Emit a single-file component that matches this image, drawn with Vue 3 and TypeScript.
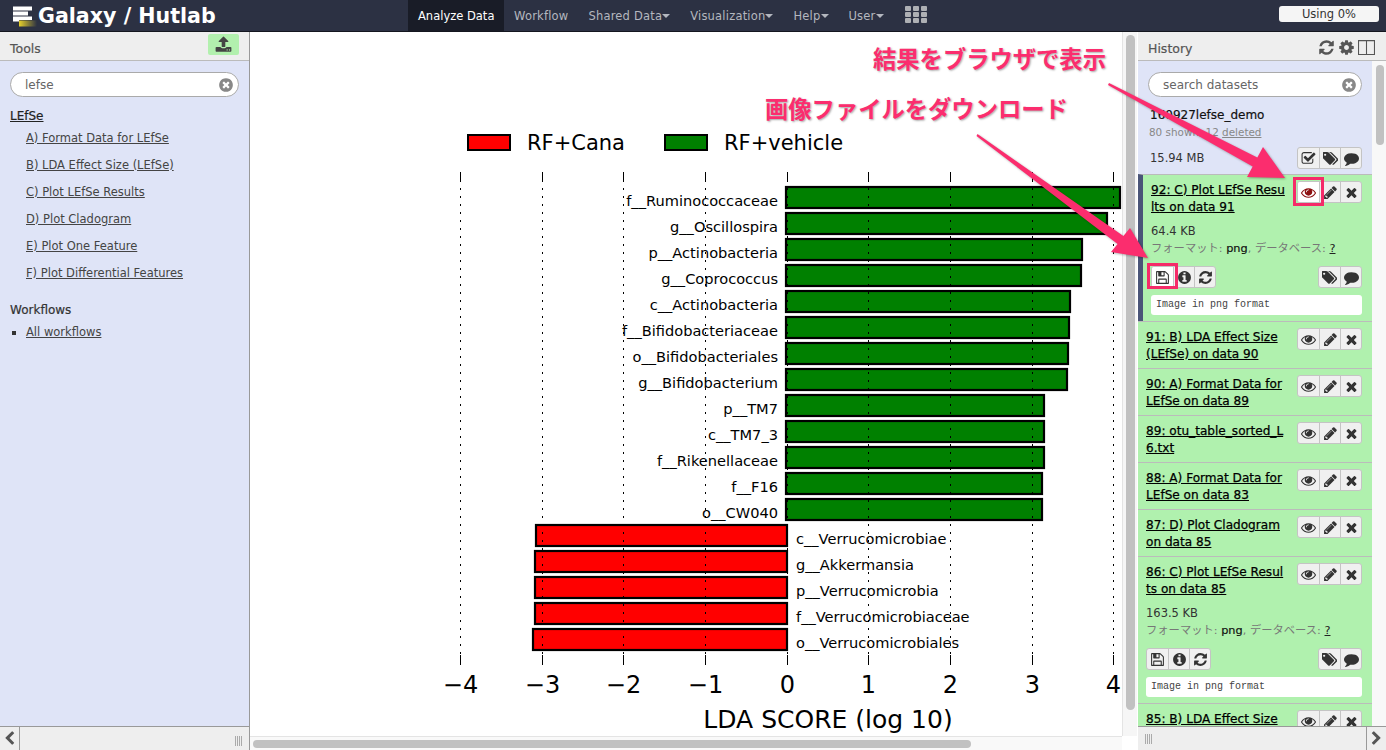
<script setup lang="ts">
// chart rows: label + outer bar end in page pixels
const greenRows: [string, number][] = [
  ['f__Ruminococcaceae', 1121], ['g__Oscillospira', 1108], ['p__Actinobacteria', 1083],
  ['g__Coprococcus', 1082], ['c__Actinobacteria', 1071], ['f__Bifidobacteriaceae', 1070],
  ['o__Bifidobacteriales', 1069], ['g__Bifidobacterium', 1068], ['p__TM7', 1045],
  ['c__TM7_3', 1045], ['f__Rikenellaceae', 1045], ['f__F16', 1043], ['o__CW040', 1043],
]
const redRows: [string, number][] = [
  ['c__Verrucomicrobiae', 535], ['g__Akkermansia', 534], ['p__Verrucomicrobia', 534],
  ['f__Verrucomicrobiaceae', 534], ['o__Verrucomicrobiales', 532],
]
const ticks = [
  { x: 460.5, label: '−4' }, { x: 542.5, label: '−3' }, { x: 623.5, label: '−2' },
  { x: 705.5, label: '−1' }, { x: 787.5, label: '0' }, { x: 868.5, label: '1' },
  { x: 950.5, label: '2' }, { x: 1032.5, label: '3' }, { x: 1113.5, label: '4' },
]
const rowCenter = (i: number) => 197.5 + i * 26

const toolLinks = [
  'A) Format Data for LEfSe', 'B) LDA Effect Size (LEfSe)', 'C) Plot LEfSe Results',
  'D) Plot Cladogram', 'E) Plot One Feature', 'F) Plot Differential Features',
]
const navItems = [
  { label: 'Analyze Data', active: true }, { label: 'Workflow' },
  { label: 'Shared Data', caret: true }, { label: 'Visualization', caret: true },
  { label: 'Help', caret: true }, { label: 'User', caret: true },
]

interface Dataset { title: string; size?: string; current?: boolean }
const datasets: Dataset[] = [
  { title: '92: C) Plot LEfSe Resu\nlts on data 91', size: '64.4 KB', current: true },
  { title: '91: B) LDA Effect Size\n(LEfSe) on data 90' },
  { title: '90: A) Format Data for\nLEfSe on data 89' },
  { title: '89: otu_table_sorted_L\n6.txt' },
  { title: '88: A) Format Data for\nLEfSe on data 83' },
  { title: '87: D) Plot Cladogram\non data 85' },
  { title: '86: C) Plot LEfSe Resul\nts on data 85', size: '163.5 KB' },
  { title: '85: B) LDA Effect Size' },
]

// font-awesome 4 outlines, 1792 box
const icons: Record<string, string> = {
  eye: 'M1664 960q-152-236-381-353 61 104 61 225 0 185-131.5 316.5t-316.5 131.5-316.5-131.5-131.5-316.5q0-121 61-225-229 117-381 353 133 205 333.5 326.5t434.5 121.5 434.5-121.5 333.5-326.5zm-720-384q0-20-14-34t-34-14q-125 0-214.5 89.5t-89.5 214.5q0 20 14 34t34 14 34-14 14-34q0-86 61-147t147-61q20 0 34-14t14-34zm848 384q0 34-20 69-140 230-376.5 368.5t-499.5 138.5-499.5-139-376.5-368q-20-35-20-69t20-69q140-229 376.5-368t499.5-139 499.5 139 376.5 368q20 35 20 69z',
  pencil: 'M491 1536l91-91-235-235-91 91v107h128v128h107zm523-928q0-22-22-22-10 0-17 7l-542 542q-7 7-7 17 0 22 22 22 10 0 17-7l542-542q7-7 7-17zm-54-192l416 416-832 832h-416v-416zm683 96q0 53-37 90l-166 166-416-416 166-165q36-38 90-38 53 0 91 38l235 234q37 39 37 91z',
  times: 'M1490 1322q0 40-28 68l-136 136q-28 28-68 28t-68-28l-294-294-294 294q-28 28-68 28t-68-28l-136-136q-28-28-28-68t28-68l294-294-294-294q-28-28-28-68t28-68l136-136q28-28 68-28t68 28l294 294 294-294q28-28 68-28t68 28l136 136q28 28 28 68t-28 68l-294 294 294 294q28 28 28 68z',
  comment: 'M1792 896q0 174-120 321.5t-326 233-450 85.5q-70 0-145-8-198 175-460 242-49 14-114 22-17 2-30.5-9t-17.5-29v-1q-3-4-.5-12t2-10 4.5-9.5l6-9 7-8.5 8-9q7-8 31-34.5t34.5-38 31-39.5 32.5-51 27-59 26-76q-157-89-247.5-220t-90.5-281q0-130 71-248.5t191-204.5 286-136.5 348-50.5q244 0 450 85.5t326 233 120 321.5z',
  tags: 'M384 448q0-53-37.5-90.5t-90.5-37.5-90.5 37.5-37.5 90.5 37.5 90.5 90.5 37.5 90.5-37.5 37.5-90.5zm1067 576q0 53-37 90l-491 492q-39 37-91 37-53 0-90-37l-715-716q-38-37-64.5-101t-26.5-117v-416q0-52 38-90t90-38h416q53 0 117 26.5t102 64.5l715 714q37 39 37 91zm384 0q0 53-37 90l-491 492q-39 37-91 37-36 0-59-14t-53-45l470-470q37-37 37-90 0-52-37-91l-715-714q-38-38-102-64.5t-117-26.5h224q53 0 117 26.5t102 64.5l715 714q37 39 37 91z',
  info: 'M1152 1376v-160q0-14-9-23t-23-9h-96v-512q0-14-9-23t-23-9h-320q-14 0-23 9t-9 23v160q0 14 9 23t23 9h96v320h-96q-14 0-23 9t-9 23v160q0 14 9 23t23 9h448q14 0 23-9t9-23zm-128-896v-160q0-14-9-23t-23-9h-192q-14 0-23 9t-9 23v160q0 14 9 23t23 9h192q14 0 23-9t9-23zm640 416q0 209-103 385.5t-279.5 279.5-385.5 103-385.5-103-279.5-279.5-103-385.5 103-385.5 279.5-279.5 385.5-103 385.5 103 279.5 279.5 103 385.5z',
  clear: 'M1277 1122q0-26-19-45l-181-181 181-181q19-19 19-45 0-27-19-46l-90-90q-19-19-46-19-26 0-45 19l-181 181-181-181q-19-19-45-19-27 0-46 19l-90 90q-19 19-19 46 0 26 19 45l181 181-181 181q-19 19-19 45 0 27 19 46l90 90q19 19 46 19 26 0 45-19l181-181 181 181q19 19 45 19 27 0 46-19l90-90q19-19 19-46zm387-226q0 209-103 385.5t-279.5 279.5-385.5 103-385.5-103-279.5-279.5-103-385.5 103-385.5 279.5-279.5 385.5-103 385.5 103 279.5 279.5 103 385.5z',
  save: 'M512 1536h768v-384h-768v384zm896 0h128v-896q0-14-10-38.5t-20-34.5l-281-281q-10-10-34-20t-39-10v416q0 40-28 68t-68 28h-576q-40 0-68-28t-28-68v-416h-128v1280h128v-416q0-40 28-68t68-28h832q40 0 68 28t28 68v416zm-384-928v-320q0-13-9.5-22.5t-22.5-9.5h-192q-13 0-22.5 9.5t-9.5 22.5v320q0 13 9.5 22.5t22.5 9.5h192q13 0 22.5-9.5t9.5-22.5zm640 32v928q0 40-28 68t-68 28h-1344q-40 0-68-28t-28-68v-1344q0-40 28-68t68-28h928q40 0 88 20t76 48l280 280q28 28 48 76t20 88z',
  check: 'M1472 930v318q0 119-84.5 203.5t-203.5 84.5h-832q-119 0-203.5-84.5t-84.5-203.5v-832q0-119 84.5-203.5t203.5-84.5h832q63 0 117 25 15 7 18 23 3 17-9 29l-49 49q-10 10-23 10-3 0-9-2-23-6-45-6h-832q-66 0-113 47t-47 113v832q0 66 47 113t113 47h832q66 0 113-47t47-113v-254q0-13 9-22l64-64q10-10 23-10 6 0 12 3 20 8 20 29zm231-489l-814 814q-24 24-57 24t-57-24l-430-430q-24-24-24-57t24-57l110-110q24-24 57-24t57 24l263 263 647-647q24-24 57-24t57 24l110 110q24 24 24 57t-24 57z',
  refresh: 'M1639 1056q0 5-1 7-64 268-268 434.5t-478 166.5q-146 0-282.5-55t-243.5-157l-129 129q-19 19-45 19t-45-19-19-45v-448q0-26 19-45t45-19h448q26 0 45 19t19 45-19 45l-137 137q71 66 161 102t187 36q134 0 250-65t186-179q11-17 53-117 8-23 30-23h192q13 0 22.5 9.5t9.5 22.5zm25-800v448q0 26-19 45t-45 19h-448q-26 0-45-19t-19-45 19-45l138-138q-148-137-349-137-134 0-250 65t-186 179q-11 17-53 117-8 23-30 23h-199q-13 0-22.5-9.5t-9.5-22.5v-7q65-268 270-434.5t480-166.5q146 0 284 55.5t245 156.5l130-129q19-19 45-19t45 19 19 45z',
  cog: 'M1152 896q0-106-75-181t-181-75-181 75-75 181 75 181 181 75 181-75 75-181zm512-109v222q0 12-8 23t-20 13l-185 28q-19 54-39 91 35 50 107 138 10 12 10 25t-9 23q-27 37-99 108t-94 71q-12 0-26-9l-138-108q-44 23-91 38-16 136-29 186-7 28-36 28h-222q-14 0-24.5-8.5t-11.5-21.5l-28-184q-49-16-90-37l-141 107q-10 9-25 9-14 0-25-11-126-114-165-168-7-10-7-23 0-12 8-23 15-21 51-66.5t54-70.5q-27-50-41-99l-183-27q-13-2-21-12.5t-8-23.5v-222q0-12 8-23t19-13l186-28q14-46 39-92-40-57-107-138-10-12-10-24 0-10 9-23 26-36 98.5-107.5t94.5-71.5q13 0 26 10l138 107q44-23 91-38 16-136 29-186 7-28 36-28h222q14 0 24.5 8.5t11.5 21.5l28 184q49 16 90 37l142-107q9-9 24-9 13 0 25 10 129 119 165 170 7 8 7 22 0 12-8 23-15 21-51 66.5t-54 70.5q26 50 41 98l183 28q13 2 21 12.5t8 23.5z',
  upload: 'M1344 1472q0-26-19-45t-45-19-45 19-19 45 19 45 45 19 45-19 19-45zm256 0q0-26-19-45t-45-19-45 19-19 45 19 45 45 19 45-19 19-45zm128-224v320q0 40-28 68t-68 28h-1472q-40 0-68-28t-28-68v-320q0-40 28-68t68-28h427q21 56 70.5 92t110.5 36h256q61 0 110.5-36t70.5-92h427q40 0 68 28t28 68zm-325-648q-17 40-59 40h-256v448q0 26-19 45t-45 19h-256q-26 0-45-19t-19-45v-448h-256q-42 0-59-40-17-39 14-69l448-448q18-19 45-19t45 19l448 448q31 30 14 69z',
  left: 'M1427 301l-531 531 531 531q19 19 19 45t-19 45l-166 166q-19 19-45 19t-45-19l-742-742q-19-19-19-45t19-45l742-742q19-19 45-19t45 19l166 166q19 19 19 45t-19 45z',
  right: 'M1363 877l-742 742q-19 19-45 19t-45-19l-166-166q-19-19-19-45t19-45l531-531-531-531q-19-19-19-45t19-45l166-166q19-19 45-19t45 19l742 742q19 19 19 45t-19 45z',
}
</script>

<template>
  <div class="page">
    <header class="masthead">
      <div class="brand">
        <svg class="logo" viewBox="0 0 28 28" width="28" height="28">
          <defs>
            <linearGradient id="logoGold" x1="0" x2="1" y1="0" y2="0">
              <stop offset="0" stop-color="#e6cf2b" />
              <stop offset="1" stop-color="#e6cf2b" stop-opacity="0" />
            </linearGradient>
          </defs>
          <rect x="0" y="4.5" width="19" height="4" fill="#fff" />
          <rect x="0" y="9.5" width="15" height="4" fill="#fff" />
          <rect x="0" y="14.5" width="19" height="3.5" fill="#fff" />
          <rect x="0" y="18" width="6" height="1.5" fill="#fff" />
          <rect x="6" y="18.5" width="18" height="6" fill="url(#logoGold)" />
        </svg>
        <span class="brand-title">Galaxy / Hutlab</span>
      </div>
      <nav class="nav">
        <a v-for="item in navItems" :key="item.label" class="nav-item" :class="{ active: item.active }">
          {{ item.label }}<i v-if="item.caret" class="caret"></i>
        </a>
        <div class="apps">
          <i v-for="n in 9" :key="n"></i>
        </div>
      </nav>
      <div class="quota">Using 0%</div>
    </header>

    <main class="panels">
      <aside class="tools">
        <div class="panel-head">
          <span class="head-label">Tools</span>
          <button class="upload-btn">
            <svg viewBox="0 0 1792 1792"><path :d="icons.upload" /></svg>
          </button>
        </div>
        <div class="tools-body">
          <div class="search">
            <span>lefse</span>
            <svg class="clear" viewBox="0 0 1792 1792"><path :d="icons.clear" /></svg>
          </div>
          <a class="section-link">LEfSe</a>
          <a v-for="link in toolLinks" :key="link" class="tool-link">{{ link }}</a>
          <div class="section-title">Workflows</div>
          <ul class="wf-list">
            <li><a>All workflows</a></li>
          </ul>
        </div>
        <div class="panel-foot">
          <span class="toggle">
            <svg viewBox="0 0 1792 1792"><path :d="icons.left" /></svg>
          </span>
          <span class="grip right"></span>
        </div>
      </aside>

      <section class="center">
        <svg class="chart" viewBox="250 32 887 718" width="887" height="718">
          <g>
            <rect x="468" y="135" width="42" height="15" fill="#f00" stroke="#000" stroke-width="2" />
            <text x="527" y="150" class="legend">RF+Cana</text>
            <rect x="665" y="135" width="42" height="15" fill="#008000" stroke="#000" stroke-width="2" />
            <text x="724" y="150" class="legend">RF+vehicle</text>
          </g>
          <rect
            v-for="(row, i) in greenRows"
            :key="row[0]"
            x="786"
            :y="rowCenter(i) - 10.5"
            :width="row[1] - 787"
            height="21"
            fill="#008000"
            stroke="#000"
            stroke-width="2.2"
          />
          <rect
            v-for="(row, i) in redRows"
            :key="row[0]"
            :x="row[1] + 1"
            :y="rowCenter(i + 13) - 10.5"
            :width="787 - row[1] - 1"
            height="21"
            fill="#f00"
            stroke="#000"
            stroke-width="2.2"
          />
          <text
            v-for="(row, i) in greenRows"
            :key="row[0]"
            x="778"
            :y="rowCenter(i) + 8.5"
            text-anchor="end"
            class="row-label"
          >{{ row[0] }}</text>
          <text
            v-for="(row, i) in redRows"
            :key="row[0]"
            x="796"
            :y="rowCenter(i + 13) + 8.5"
            class="row-label"
          >{{ row[0] }}</text>
          <g v-for="t in ticks" :key="t.x">
            <line :x1="t.x" :x2="t.x" y1="172" y2="665" stroke="#000" stroke-dasharray="2 6" />
            <line :x1="t.x" :x2="t.x" y1="172" y2="182" stroke="#000" />
            <line :x1="t.x" :x2="t.x" y1="655" y2="665" stroke="#000" />
            <text :x="t.x" y="693" text-anchor="middle" class="tick-label">{{ t.label }}</text>
          </g>
          <text x="828" y="728" text-anchor="middle" class="axis-label">LDA SCORE (log 10)</text>
        </svg>
        <div class="vbar"><i></i></div>
        <div class="hbar"><i></i></div>
      </section>

      <aside class="history">
        <div class="panel-head">
          <span class="head-label">History</span>
          <div class="head-icons">
            <svg viewBox="0 0 1792 1792"><path :d="icons.refresh" /></svg>
            <svg viewBox="0 0 1792 1792"><path :d="icons.cog" /></svg>
            <svg viewBox="0 0 16 16" class="columns"><path d="M.5 1.5h15v13H.5zM8 1.5v13" /></svg>
          </div>
        </div>
        <div class="history-scroll">
          <div class="history-list">
            <div class="history-top">
              <div class="search">
                <span>search datasets</span>
                <svg class="clear" viewBox="0 0 1792 1792"><path :d="icons.clear" /></svg>
              </div>
              <div class="hist-name">160927lefse_demo</div>
              <div class="hist-counts">80 shown, 12 <a>deleted</a></div>
              <div class="hist-size-row">
                <span>15.94 MB</span>
                <div class="btn-group">
                  <button v-for="n in ['check', 'tags', 'comment']" :key="n">
                    <svg viewBox="0 0 1792 1792"><path :d="icons[n]" /></svg>
                  </button>
                </div>
              </div>
            </div>
            <article v-for="d in datasets" :key="d.title" class="dataset" :class="{ current: d.current }">
              <div class="ds-head">
                <a class="ds-title">{{ d.title }}</a>
                <div class="btn-group">
                  <button :class="{ hovered: d.current }">
                    <svg viewBox="0 0 1792 1792"><path :d="icons.eye" /></svg>
                  </button>
                  <button><svg viewBox="0 0 1792 1792"><path :d="icons.pencil" /></svg></button>
                  <button><svg viewBox="0 0 1792 1792"><path :d="icons.times" /></svg></button>
                </div>
              </div>
              <div v-if="d.size" class="ds-body">
                <div class="ds-size">{{ d.size }}</div>
                <div class="ds-meta">フォーマット: <b>png</b>, データベース: <a>?</a></div>
                <div class="ds-actions">
                  <div class="btn-group">
                    <button :class="{ hovered: d.current }">
                      <svg viewBox="0 0 1792 1792"><path :d="icons.save" /></svg>
                    </button>
                    <button><svg viewBox="0 0 1792 1792"><path :d="icons.info" /></svg></button>
                    <button><svg viewBox="0 0 1792 1792"><path :d="icons.refresh" /></svg></button>
                  </div>
                  <div class="btn-group">
                    <button><svg viewBox="0 0 1792 1792"><path :d="icons.tags" /></svg></button>
                    <button><svg viewBox="0 0 1792 1792"><path :d="icons.comment" /></svg></button>
                  </div>
                </div>
                <div class="ds-info">Image in png format</div>
              </div>
            </article>
          </div>
          <div class="hist-track"><i></i></div>
        </div>
        <div class="panel-foot hist-foot">
          <span class="grip"></span>
          <span class="toggle">
            <svg viewBox="0 0 1792 1792"><path :d="icons.right" /></svg>
          </span>
        </div>
      </aside>
    </main>

    <!-- screenshot annotations drawn on top of the app -->
    <div class="note note-view">結果をブラウザで表示</div>
    <div class="note note-save">画像ファイルをダウンロード</div>
    <svg class="arrows" viewBox="0 0 1386 750" width="1386" height="750">
      <polygon points="1109,83 1257.3,157.6 1263,147 1285,178 1247,177 1252.7,166.4 1108,85" />
      <polygon points="977.5,134 1123.4,236 1130,228 1148,258 1111,252 1117.6,244 976.5,136" />
    </svg>
    <div class="mark mark-eye"></div>
    <div class="mark mark-save"></div>
  </div>
</template>

<style scoped>
.page {
  position: relative;
  width: 1386px;
  height: 750px;
  display: flex;
  flex-direction: column;
  overflow: hidden;
  font-family: "DejaVu Sans", "Noto Sans CJK JP", sans-serif;
  font-size: 11.5px;
  color: #333;
  background: #fff;
}

/* masthead */
.masthead {
  height: 31px;
  flex: none;
  display: flex;
  align-items: stretch;
  background: #2c3143;
  border-bottom: 1px solid #14161f;
}
.brand {
  width: 408px;
  flex: none;
  display: flex;
  align-items: center;
  padding-left: 13px;
  box-sizing: border-box;
}
.logo {
  flex: none;
  margin-right: -3px;
}
.brand-title {
  font-size: 20.6px;
  font-weight: 700;
  color: #fff;
  white-space: nowrap;
}
.nav {
  display: flex;
  align-items: stretch;
}
.nav-item {
  display: flex;
  align-items: center;
  padding: 0 10px;
  color: #b4b7bf;
  white-space: nowrap;
  letter-spacing: 0.2px;
}
.nav-item.active {
  padding-right: 10px;
  width: 96px;
  box-sizing: border-box;
  background: #191c27;
  color: #fff;
  letter-spacing: 0;
}
.caret {
  display: inline-block;
  border-top: 4px solid #b4b7bf;
  border-left: 4px solid transparent;
  border-right: 4px solid transparent;
}
.apps {
  margin: 6px 0 0 11px;
  width: 22px;
  height: 18px;
  display: grid;
  grid-template-columns: repeat(3, 6px);
  grid-template-rows: repeat(3, 5px);
  gap: 1px 2px;
}
.apps i {
  background: #aeb0b4;
  border-radius: 1px;
}
.quota {
  margin: 6px 7px 0 auto;
  width: 100px;
  height: 16px;
  border-radius: 3px;
  background: #f5f5f5;
  color: #333;
  font-size: 11.5px;
  line-height: 16px;
  text-align: center;
}

/* three columns */
.panels {
  flex: 1;
  min-height: 0;
  display: grid;
  grid-template-columns: 250px 888px 248px;
}
.panel-head {
  height: 28px;
  flex: none;
  display: flex;
  align-items: center;
  justify-content: space-between;
  padding: 0 10px;
  background: #eee;
  border-bottom: 1px solid #bbb;
  font-size: 12.5px;
  color: #555;
  -webkit-text-stroke: 0.2px #555;
}
.head-label {
  padding-top: 4px;
}
.panel-foot {
  height: 23px;
  flex: none;
  display: flex;
  align-items: center;
  justify-content: space-between;
  background: #eee;
  border-top: 1px solid #999;
}
.toggle {
  width: 19px;
  height: 100%;
  display: flex;
  align-items: center;
  justify-content: center;
  border-right: 1px solid #999;
}
.toggle svg {
  width: 15px;
  height: 15px;
  fill: #555;
}
.grip {
  width: 7px;
  height: 10px;
  margin: 0 7px;
  background: repeating-linear-gradient(90deg, #aaa 0 1px, transparent 1px 2px);
}
.grip.right {
  margin: 4px 7px 0 0;
}
.hist-foot .toggle {
  border-right: 0;
  border-left: 1px solid #999;
}

/* tools */
.tools {
  display: flex;
  flex-direction: column;
  border-right: 1px solid #999;
  min-height: 0;
}
.upload-btn {
  width: 31px;
  height: 21px;
  margin-top: -3px;
  padding: 0;
  border: 0;
  border-radius: 2px;
  background: #b2f0ae;
  display: flex;
  align-items: center;
  justify-content: center;
}
.upload-btn svg {
  width: 17px;
  height: 17px;
  fill: #444;
}
.tools-body {
  flex: 1;
  padding: 11px 10px 0;
  background: #dfe4f7;
}
.search {
  height: 23px;
  display: flex;
  align-items: center;
  justify-content: space-between;
  padding: 0 4px 0 14px;
  background: #fff;
  border: 1px solid #aaa;
  border-radius: 13px;
  color: #666;
  font-size: 12px;
}
.clear {
  width: 16px;
  height: 16px;
  fill: #888;
}
.section-link {
  display: block;
  margin-top: 12px;
  font-size: 12px;
  line-height: 15px;
  color: #222;
  text-decoration: underline;
  -webkit-text-stroke: 0.2px #222;
}
.tool-link {
  display: block;
  margin: 1px 0 -1px 16px;
  padding-top: 6px;
  height: 21px;
  line-height: 15px;
  color: #444;
  text-decoration: underline;
  white-space: nowrap;
}
.section-title {
  margin-top: 17px;
  line-height: 15px;
  font-size: 12px;
  color: #333;
  -webkit-text-stroke: 0.2px #333;
}
.wf-list {
  margin: 7px 0 0;
  padding: 0 0 0 16px;
  list-style: square;
  line-height: 15px;
}
.wf-list a {
  color: #444;
  text-decoration: underline;
}

/* center */
.center {
  position: relative;
  overflow: hidden;
  background: #fff;
}
.chart {
  display: block;
  font-family: "DejaVu Sans", sans-serif;
}
.legend {
  font-size: 21px;
}
.row-label {
  font-size: 14.6px;
}
.tick-label {
  font-size: 24px;
}
.axis-label {
  font-size: 25px;
}
.vbar {
  position: absolute;
  top: 0;
  right: 1px;
  bottom: 14px;
  width: 15px;
  background: #f6f6f6;
  border-left: 1px solid #e4e4e4;
  box-sizing: border-box;
}
.vbar i {
  position: absolute;
  top: 3px;
  bottom: 26px;
  left: 3px;
  width: 9px;
  background: #c1c1c1;
  border-radius: 5px;
}
.hbar {
  position: absolute;
  left: 0;
  right: 16px;
  bottom: 0;
  height: 14px;
  background: #f9f9f9;
  border-top: 1px solid #e4e4e4;
  box-sizing: border-box;
}
.hbar i {
  position: absolute;
  left: 3px;
  top: 3px;
  width: 718px;
  height: 8px;
  background: #c1c1c1;
  border-radius: 4px;
}

/* history */
.history {
  display: flex;
  flex-direction: column;
  min-height: 0;
  border-left: 1px solid #999;
  margin-left: -1px;
}
.head-icons {
  display: flex;
  align-items: center;
  gap: 3px;
  margin-right: 1px;
  padding-top: 2px;
}
.head-icons svg {
  width: 17px;
  height: 17px;
  fill: #555;
}
.head-icons .columns {
  fill: none;
  stroke: #555;
}
.history-scroll {
  flex: 1;
  min-height: 0;
  display: flex;
  overflow: hidden;
}
.history-list {
  width: 234px;
  flex: none;
  background: #dfe4f7;
}
.hist-track {
  flex: 1;
  position: relative;
  background: #f8f8f8;
}
.hist-track i {
  position: absolute;
  left: 4px;
  top: 4px;
  width: 8px;
  height: 80px;
  border-radius: 4px;
  background: #c1c1c1;
}
.history-top {
  padding: 11px 10px 5px;
}
.hist-name {
  margin-top: 11px;
  padding-left: 2px;
  line-height: 15px;
  font-size: 12px;
  color: #111;
  -webkit-text-stroke: 0.2px #111;
}
.hist-counts {
  margin-top: 1px;
  padding-left: 1px;
  line-height: 16px;
  font-size: 10.4px;
  color: #888;
}
.hist-counts a {
  text-decoration: underline;
}
.hist-size-row {
  display: flex;
  align-items: center;
  justify-content: space-between;
  margin-top: 7px;
  padding-left: 2px;
  color: #333;
}
.btn-group {
  display: flex;
  flex: none;
  height: 22px;
  border: 1px solid #c4c4c4;
  border-radius: 3px;
  box-sizing: border-box;
  background: #f0f0f0;
  overflow: hidden;
}
.btn-group button {
  width: 21px;
  padding: 0;
  border: 0;
  border-left: 1px solid #c4c4c4;
  background: transparent;
  display: flex;
  align-items: center;
  justify-content: center;
  box-sizing: border-box;
}
.btn-group button:first-child {
  border-left: 0;
}
.btn-group svg {
  width: 15px;
  height: 15px;
  fill: #333;
}
.btn-group button.hovered {
  background: #fff;
}
.dataset {
  background: #b0f1ae;
  border-top: 1px solid #bbb;
  padding: 6px 10px 5px 8px;
}
.dataset.current {
  border-left: 5px solid #4a5578;
}
.ds-head {
  display: flex;
  justify-content: space-between;
  align-items: flex-start;
  height: 35px;
}
.ds-title {
  margin-top: 1px;
  white-space: pre-line;
  line-height: 17px;
  font-size: 12.1px;
  color: #000;
  text-decoration: underline;
  -webkit-text-stroke: 0.25px #000;
}
.current .ds-head button.hovered svg {
  fill: #8c1010;
}
.ds-body {
  padding: 6px 0 1px;
}
.ds-size {
  line-height: 18px;
  color: #333;
}
.ds-meta {
  line-height: 18px;
  color: #777;
  font-size: 11.3px;
}
.ds-meta b {
  font-weight: 500;
  color: #111;
  -webkit-text-stroke: 0.2px #111;
}
.ds-meta a {
  color: #222;
  text-decoration: underline;
}
.ds-actions {
  display: flex;
  justify-content: space-between;
  margin-top: 8px;
}
.ds-info {
  margin-top: 7px;
  height: 20px;
  padding-left: 5px;
  border-radius: 3px;
  background: #fff;
  font-family: "Liberation Mono", monospace;
  font-size: 10px;
  line-height: 20px;
  color: #444;
}

/* annotations */
.note {
  position: absolute;
  font-family: "Noto Sans CJK JP", sans-serif;
  font-size: 23.3px;
  font-weight: 700;
  line-height: 30px;
  color: #fb2d6e;
  white-space: nowrap;
  text-shadow: 1px 1px 2px rgba(0, 0, 0, 0.35);
}
.note-view {
  left: 873px;
  top: 43px;
}
.note-save {
  left: 765px;
  top: 93px;
}
.arrows {
  position: absolute;
  left: 0;
  top: 0;
  pointer-events: none;
  fill: #fb2d6e;
  filter: drop-shadow(1px 1px 1px rgba(0, 0, 0, 0.3));
}
.mark {
  position: absolute;
  box-sizing: border-box;
  border: 3px solid #f52b69;
  pointer-events: none;
}
.mark-eye {
  left: 1293px;
  top: 177px;
  width: 31px;
  height: 29px;
}
.mark-save {
  left: 1147px;
  top: 263px;
  width: 31px;
  height: 26px;
}
</style>
